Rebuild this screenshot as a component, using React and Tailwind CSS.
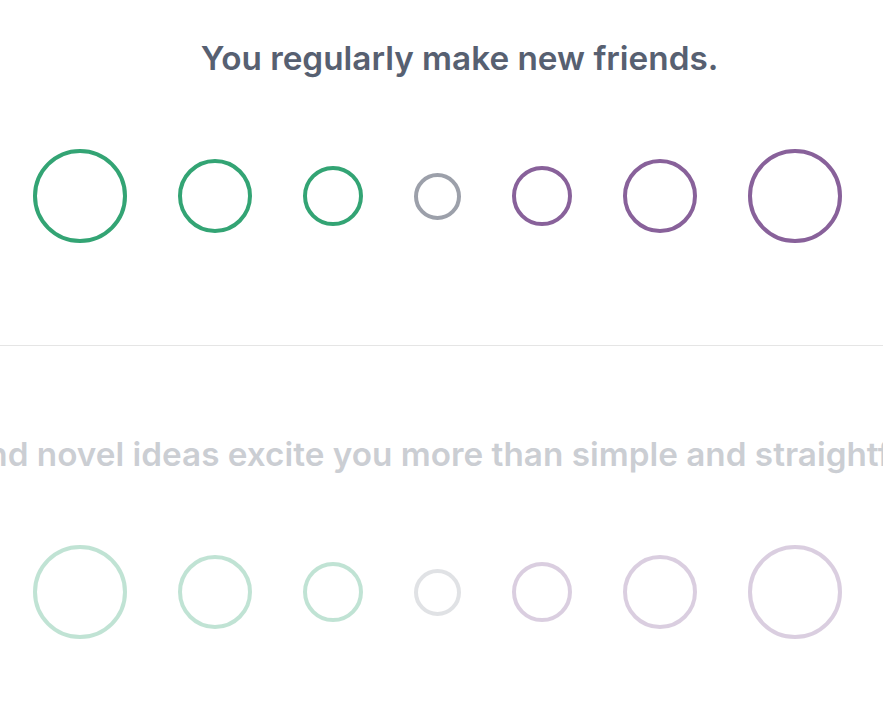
import React from 'react';

const SIZES = [
  { size: 'w-[94px] h-[94px]', color: 'border-[#33a474]' },
  { size: 'w-[74px] h-[74px]', color: 'border-[#33a474]' },
  { size: 'w-[60px] h-[60px]', color: 'border-[#33a474]' },
  { size: 'w-[47px] h-[47px]', color: 'border-[#9ca0aa]' },
  { size: 'w-[60px] h-[60px]', color: 'border-[#88619a]' },
  { size: 'w-[74px] h-[74px]', color: 'border-[#88619a]' },
  { size: 'w-[94px] h-[94px]', color: 'border-[#88619a]' },
];

function Options() {
  return (
    <div className="flex items-center justify-center gap-[51px] h-[94px] pr-[9px]">
      {SIZES.map((s, i) => (
        <button key={i} className={`shrink-0 rounded-full border-4 bg-white ${s.size} ${s.color}`} />
      ))}
    </div>
  );
}

function Question({ text, first }) {
  return (
    <div className={`${first ? 'pt-[34px] border-b border-[#e5e5e5]' : 'pt-[84px] opacity-30'} pb-[102px]`}>
      <div className="flex justify-center pl-[36px]">
        <h2 className="shrink-0 whitespace-nowrap text-[33.3px] leading-[48px] font-semibold text-[#576071]">{text}</h2>
      </div>
      <div className="mt-[67px]">
        <Options />
      </div>
    </div>
  );
}

export default function App() {
  return (
    <div className="min-h-screen bg-white overflow-hidden font-['Inter','Liberation_Sans',sans-serif]">
      <Question first text="You regularly make new friends." />
      <Question text="Complex and novel ideas excite you more than simple and straightforward ones." />
    </div>
  );
}
